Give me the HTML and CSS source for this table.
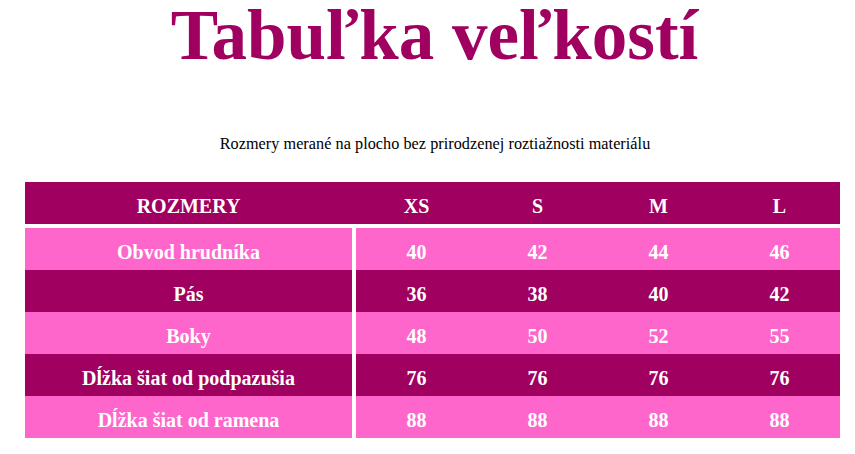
FILE: index.html
```html
<!DOCTYPE html>
<html lang="sk">
<head>
<meta charset="utf-8">
<title>Tabuľka veľkostí</title>
<link rel="stylesheet" href="styles.css">
</head>
<body>
<div class="page">
  <h1 class="title">Tabuľka veľkostí</h1>
  <p class="subtitle">Rozmery merané na plocho bez prirodzenej roztiažnosti materiálu</p>
  <div class="table">
    <div class="row head">
      <div class="cell label">ROZMERY</div>
      <div class="cell">XS</div>
      <div class="cell">S</div>
      <div class="cell">M</div>
      <div class="cell">L</div>
    </div>
    <div class="tbody">
      <div class="row light">
        <div class="cell label">Obvod hrudníka</div>
        <div class="cell">40</div><div class="cell">42</div><div class="cell">44</div><div class="cell">46</div>
      </div>
      <div class="row dark">
        <div class="cell label">Pás</div>
        <div class="cell">36</div><div class="cell">38</div><div class="cell">40</div><div class="cell">42</div>
      </div>
      <div class="row light">
        <div class="cell label">Boky</div>
        <div class="cell">48</div><div class="cell">50</div><div class="cell">52</div><div class="cell">55</div>
      </div>
      <div class="row dark">
        <div class="cell label">Dĺžka šiat od podpazušia</div>
        <div class="cell">76</div><div class="cell">76</div><div class="cell">76</div><div class="cell">76</div>
      </div>
      <div class="row light">
        <div class="cell label">Dĺžka šiat od ramena</div>
        <div class="cell">88</div><div class="cell">88</div><div class="cell">88</div><div class="cell">88</div>
      </div>
    </div>
  </div>
</div>
</body>
</html>
```
FILE: styles.css
```css
html, body {
  margin: 0;
  padding: 0;
  background: #ffffff;
}

body {
  font-family: "Liberation Serif", "Times New Roman", serif;
}

.page {
  width: 815px;
  margin-left: 25px;
}

.title {
  margin: 0;
  padding-left: 4px;
  font-size: 71px;
  line-height: 70px;
  font-weight: bold;
  color: #a0005f;
  text-align: center;
}

.subtitle {
  margin: 64px 0 0 0;
  padding-left: 5px;
  font-size: 16.2px;
  letter-spacing: 0.05px;
  line-height: 20px;
  color: #000000;
  text-align: center;
}

.table {
  margin-top: 28px;
}

.row {
  display: grid;
  grid-template-columns: 331px repeat(4, 1fr);
  height: 42px;
}

.tbody {
  margin-top: 4px;
}

.cell {
  display: flex;
  align-items: center;
  justify-content: center;
  padding-top: 6px;
  box-sizing: border-box;
  font-size: 20px;
  font-weight: bold;
  color: #ffffff;
  white-space: nowrap;
}

.head {
  background: #a0005f;
}

.head .label {
  padding-right: 4px;
}

.tbody .label {
  border-right: 4px solid #ffffff;
}

.dark {
  background: #a0005f;
}

.light {
  background: #ff66cc;
}
```
